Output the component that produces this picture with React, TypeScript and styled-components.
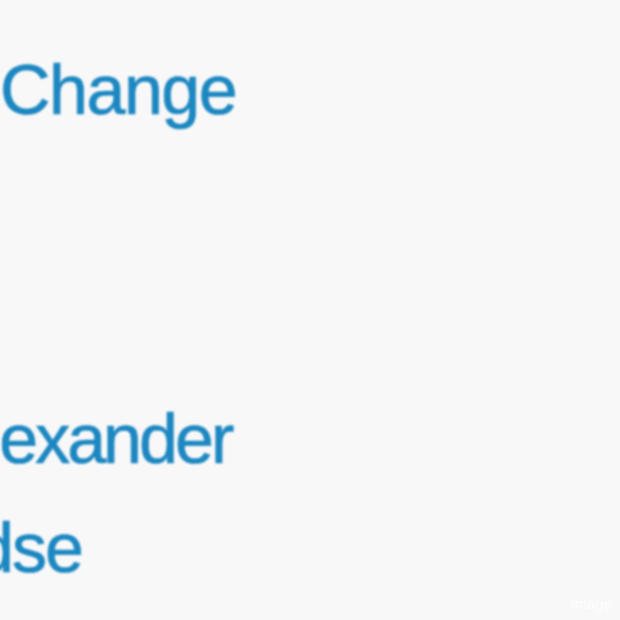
import React from 'react';
import styled, { createGlobalStyle } from 'styled-components';

const Global = createGlobalStyle`
    html, body {
        margin: 0;
        padding: 0;
        background: #f8f8f8;
    }
`;

const Page = styled.div`
    position: relative;
    width: 620px;
    height: 620px;
    overflow: hidden;
    background: #f8f8f8;
`;

const List = styled.ul`
    margin: 0;
    padding: 0;
    list-style: none;
    display: flex;
    flex-direction: column;
`;

const Item = styled.li<{ $shift: number; $top: number; $track: number }>`
    margin-left: ${p => p.$shift}px;
    margin-top: ${p => p.$top}px;
    letter-spacing: ${p => p.$track}px;
    font-family: 'Liberation Sans', Arial, sans-serif;
    font-size: 70px;
    line-height: 70px;
    height: 70px;
    white-space: nowrap;
    color: #1c87c1;
    -webkit-text-stroke: 0.7px #1c87c1;
    filter: blur(0.8px);
`;

const Mark = styled.span`
    position: absolute;
    right: 8px;
    bottom: 8px;
    font-family: 'Liberation Sans', Arial, sans-serif;
    font-size: 15px;
    color: rgba(255, 255, 255, 0.9);
`;

const App = () => (
    <Page>
        <Global />
        <List>
            <Item $shift={0} $top={55} $track={-1.5}>Change</Item>
            <Item $shift={-57} $top={279} $track={-3}>Alexander</Item>
            <Item $shift={-25} $top={39} $track={-2}>dse</Item>
        </List>
        <Mark>image</Mark>
    </Page>
);

export default App;
